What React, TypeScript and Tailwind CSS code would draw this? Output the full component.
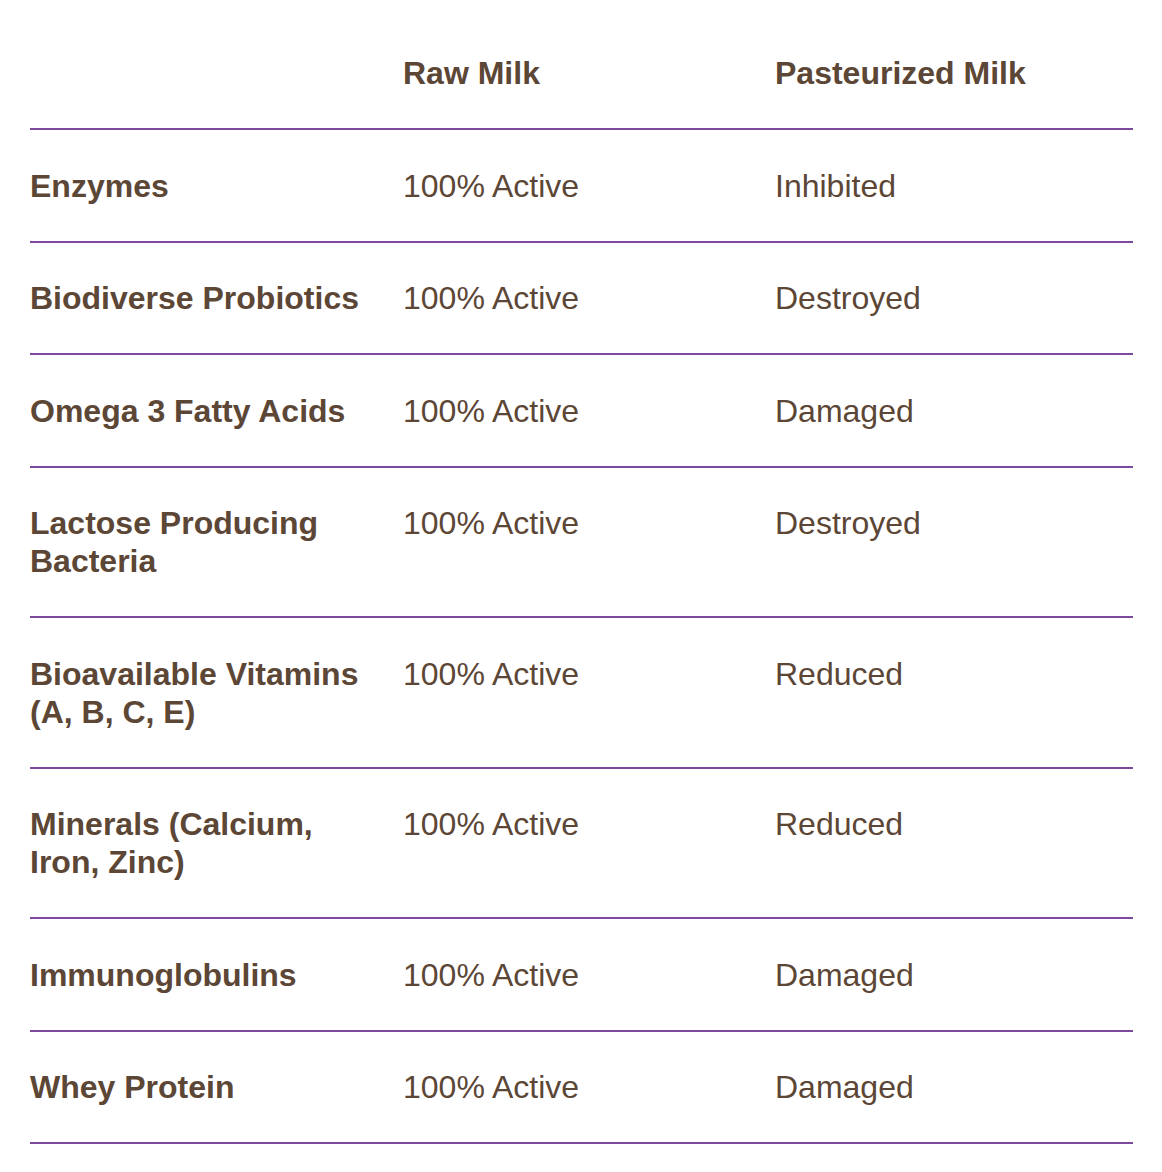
const rows = [
  { name: 'Enzymes', raw: '100% Active', past: 'Inhibited' },
  { name: 'Biodiverse Probiotics', raw: '100% Active', past: 'Destroyed' },
  { name: 'Omega 3 Fatty Acids', raw: '100% Active', past: 'Damaged' },
  { name: 'Lactose Producing Bacteria', raw: '100% Active', past: 'Destroyed' },
  { name: 'Bioavailable Vitamins (A, B, C, E)', raw: '100% Active', past: 'Reduced' },
  { name: 'Minerals (Calcium, Iron, Zinc)', raw: '100% Active', past: 'Reduced' },
  { name: 'Immunoglobulins', raw: '100% Active', past: 'Damaged' },
  { name: 'Whey Protein', raw: '100% Active', past: 'Damaged' },
];

export default function App() {
  return (
    <div className="min-h-screen bg-white pt-[18px] pl-[30px] pr-[29px] font-['Liberation_Sans',Arial,sans-serif] text-[32px] leading-[38px] text-[#5c4636]">
      <div className="grid grid-cols-[373px_372px_1fr] border-b-2 border-[#7b4a9e] font-bold">
        <div className="py-[36px]" />
        <div className="py-[36px]">Raw Milk</div>
        <div className="py-[36px]">Pasteurized Milk</div>
      </div>
      {rows.map((r) => (
        <div key={r.name} className="grid grid-cols-[373px_372px_1fr] border-b-2 border-[#7b4a9e]">
          <div className="pt-[36.5px] pb-[36px] pr-[15px] font-bold">{r.name}</div>
          <div className="pt-[36.5px] pb-[36px]">{r.raw}</div>
          <div className="pt-[36.5px] pb-[36px]">{r.past}</div>
        </div>
      ))}
    </div>
  );
}
